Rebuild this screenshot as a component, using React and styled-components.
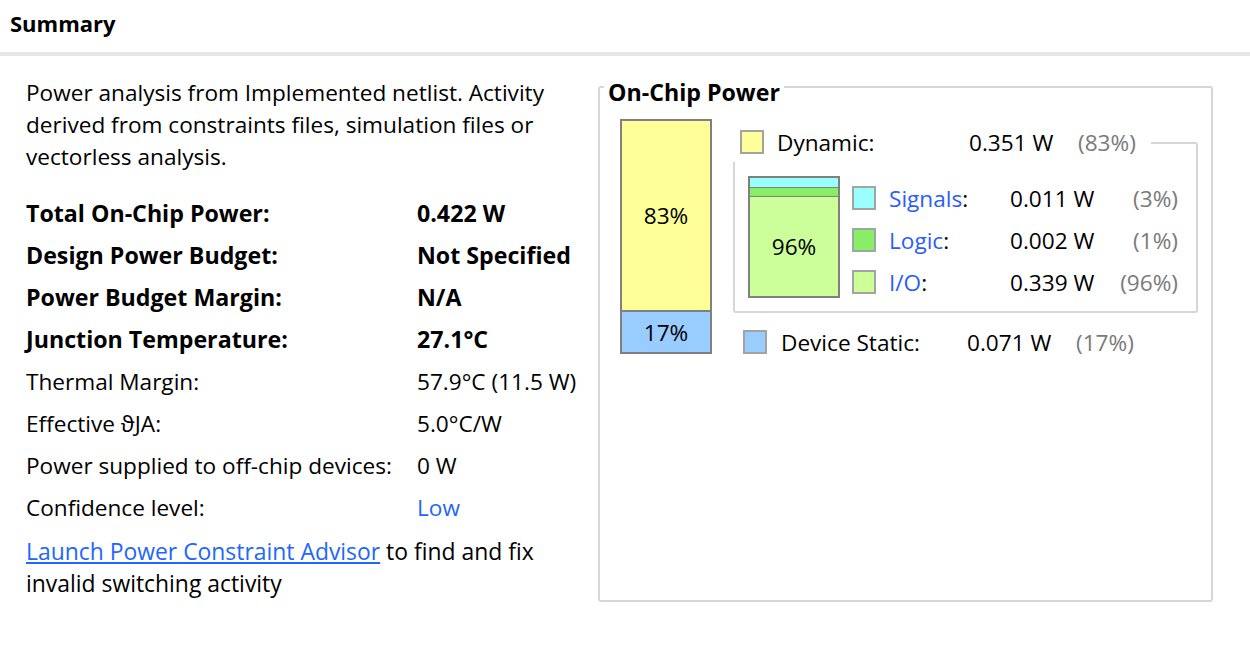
import React from 'react';
import styled, { createGlobalStyle } from 'styled-components';

const GlobalStyle = createGlobalStyle`
  html, body {
    margin: 0;
    background: #fff;
  }
  body {
    font-family: 'Open Sans', 'Noto Sans', sans-serif;
    color: #000;
  }
`;

const Page = styled.div`
  width: 1250px;
  height: 652px;
  overflow: hidden;
`;

const Header = styled.div`
  box-sizing: border-box;
  height: 56px;
  padding: 8px 0 0 10px;
  font-size: 22px;
  line-height: 30px;
  font-weight: 700;
  border-bottom: 4px solid #e6e6e6;
`;

const Body = styled.div`
  display: flex;
  padding-left: 26px;
`;

const LeftColumn = styled.div`
  width: 572px;
  font-size: 22.6px;
`;

const Description = styled.p`
  margin: 21px 0 0;
  line-height: 32px;
`;

const StatsGrid = styled.div`
  display: grid;
  grid-template-columns: 391px auto;
  grid-auto-rows: 42px;
  align-items: center;
  margin-top: 19px;
`;

const Cell = styled.div`
  font-weight: ${p => (p.$bold ? 700 : 400)};
  font-size: ${p => (p.$bold ? '23.2px' : '22.6px')};
  color: ${p => (p.$link ? '#2266ff' : '#000')};
  white-space: nowrap;
`;

const Footer = styled.p`
  margin: 8px 0 0;
  line-height: 32px;
  font-size: 22.9px;
`;

const Link = styled.a`
  color: #2266ff;
  text-decoration: underline;
  cursor: pointer;
`;

const PowerBox = styled.fieldset`
  box-sizing: border-box;
  width: 615px;
  height: 533px;
  margin: 13px 0 0;
  padding: 14px 0 0 20px;
  border: 2px solid #d6d6d6;
  border-radius: 3px;
`;

const PowerTitle = styled.legend`
  margin-left: -16px;
  padding: 10px 4px 0;
  font-size: 23.2px;
  line-height: 26px;
  font-weight: 700;
`;

const ChartArea = styled.div`
  display: flex;
  gap: 21px;
  font-size: 22.6px;
`;

const StackBar = styled.div`
  display: flex;
  flex-direction: column;
  box-sizing: border-box;
  width: ${p => p.$w}px;
  height: ${p => p.$h}px;
  border: 2px solid #808080;
  flex-shrink: 0;
`;

const Segment = styled.div`
  height: ${p => p.$h}px;
  flex-shrink: 0;
  background: ${p => p.$color};
  border-bottom: ${p => (p.$divider ? `${p.$divider}px solid #808080` : 'none')};
  display: flex;
  align-items: center;
  justify-content: center;
  ${p => p.$grow && 'flex-grow: 1;'}
`;

const LegendColumn = styled.div`
  width: 465px;
  padding-top: 3px;
`;

const LegendHead = styled.div`
  display: flex;
  align-items: center;
  height: 40px;
  padding-left: ${p => p.$indent}px;
`;

const Swatch = styled.span`
  box-sizing: border-box;
  width: 24px;
  height: 24px;
  flex-shrink: 0;
  border: 2px solid #a3a3a3;
  background: ${p => p.$color};
  margin-right: ${p => p.$gap}px;
`;

const Label = styled.span`
  width: ${p => p.$w}px;
  flex-shrink: 0;
  white-space: nowrap;
`;

const Value = styled.span`
  width: ${p => p.$w}px;
  flex-shrink: 0;
  white-space: nowrap;
`;

const Pct = styled.span`
  color: #7a7a7a;
  white-space: nowrap;
  width: ${p => (p.$w ? `${p.$w}px` : 'auto')};
  text-align: ${p => (p.$right ? 'right' : 'left')};
  flex-shrink: 0;
`;

const Connector = styled.span`
  flex: 1;
  align-self: flex-end;
  height: 20px;
  margin-left: 15px;
  box-sizing: border-box;
  border-top: 2px solid #d6d6d6;
  border-right: 2px solid #d6d6d6;
  border-top-right-radius: 3px;
`;

const DynamicGroup = styled.div`
  box-sizing: border-box;
  height: 151px;
  display: flex;
  padding: 14px 0 0 13px;
  border: 2px solid #d6d6d6;
  border-top: none;
  border-bottom-left-radius: 3px;
  border-bottom-right-radius: 3px;
`;

const DetailRows = styled.div`
  margin-left: 12px;
  padding-top: 1px;
`;

const DetailRow = styled.div`
  display: flex;
  align-items: center;
  height: 42px;
`;

const LinkText = styled.span`
  color: #2a5cff;
`;

const StaticRow = styled(LegendHead)`
  margin-top: 9px;
`;

const stats = [
  { label: 'Total On-Chip Power:', value: '0.422 W', bold: true },
  { label: 'Design Power Budget:', value: 'Not Specified', bold: true },
  { label: 'Power Budget Margin:', value: 'N/A', bold: true },
  { label: 'Junction Temperature:', value: '27.1°C', bold: true },
  { label: 'Thermal Margin:', value: '57.9°C (11.5 W)' },
  { label: 'Effective ϑJA:', value: '5.0°C/W' },
  { label: 'Power supplied to off-chip devices:', value: '0 W' },
  { label: 'Confidence level:', value: 'Low', link: true },
];

const details = [
  { name: 'Signals', color: '#99ffff', value: '0.011 W', pct: '(3%)' },
  { name: 'Logic', color: '#88ee66', value: '0.002 W', pct: '(1%)' },
  { name: 'I/O', color: '#ccff99', value: '0.339 W', pct: '(96%)' },
];

export default function App() {
  return (
    <Page>
      <GlobalStyle />
      <Header>Summary</Header>
      <Body>
        <LeftColumn>
          <Description>
            Power analysis from Implemented netlist. Activity<br />
            derived from constraints files, simulation files or<br />
            vectorless analysis.
          </Description>
          <StatsGrid>
            {stats.map(s => (
              <React.Fragment key={s.label}>
                <Cell $bold={s.bold}>{s.label}</Cell>
                <Cell $bold={s.bold} $link={s.link}>{s.value}</Cell>
              </React.Fragment>
            ))}
          </StatsGrid>
          <Footer>
            <Link>Launch Power Constraint Advisor</Link> to find and fix<br />
            invalid switching activity
          </Footer>
        </LeftColumn>

        <PowerBox>
          <PowerTitle>On-Chip Power</PowerTitle>
          <ChartArea>
            <StackBar $w={92} $h={235}>
              <Segment $color="#ffff99" $h={189} $divider={2}>83%</Segment>
              <Segment $color="#99ccff" $grow>17%</Segment>
            </StackBar>

            <LegendColumn>
              <LegendHead $indent={7}>
                <Swatch $color="#ffff99" $gap={13} />
                <Label $w={192}>Dynamic:</Label>
                <Value $w={109}>0.351 W</Value>
                <Pct>(83%)</Pct>
                <Connector />
              </LegendHead>

              <DynamicGroup>
                <StackBar $w={92} $h={122}>
                  <Segment $color="#99ffff" $h={9} $divider={1} />
                  <Segment $color="#88ee66" $h={8} $divider={1} />
                  <Segment $color="#ccff99" $grow>96%</Segment>
                </StackBar>
                <DetailRows>
                  {details.map(d => (
                    <DetailRow key={d.name}>
                      <Swatch $color={d.color} $gap={13} />
                      <Label $w={121}>
                        <LinkText>{d.name}</LinkText>:
                      </Label>
                      <Value $w={100}>{d.value}</Value>
                      <Pct $w={68} $right>{d.pct}</Pct>
                    </DetailRow>
                  ))}
                </DetailRows>
              </DynamicGroup>

              <StaticRow $indent={10}>
                <Swatch $color="#99ccff" $gap={14} />
                <Label $w={186}>Device Static:</Label>
                <Value $w={109}>0.071 W</Value>
                <Pct>(17%)</Pct>
              </StaticRow>
            </LegendColumn>
          </ChartArea>
        </PowerBox>
      </Body>
    </Page>
  );
}
